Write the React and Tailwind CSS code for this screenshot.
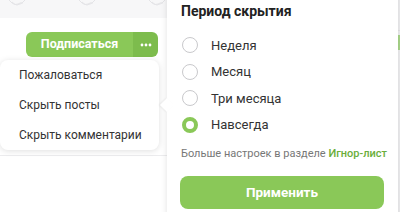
import React, { useState } from "react";

const periods = ["Неделя", "Месяц", "Три месяца", "Навсегда"];
const menuItems = ["Пожаловаться", "Скрыть посты", "Скрыть комментарии"];

const Radio = ({ checked }) => (
  <span
    className={
      checked
        ? "w-[16px] h-[16px] rounded-full border-[4px] border-[#8ac858] bg-white shrink-0"
        : "w-[16px] h-[16px] rounded-full border border-[#c9c9cc] bg-white shrink-0"
    }
  />
);

const Cupcake = () => (
  <svg width="20" height="12" viewBox="0 0 20 12" fill="none" stroke="#e4e4e7" strokeWidth="1">
    <path d="M1 1 Q10 13 19 1" />
    <path d="M5 4 Q8 8 11 6 Q14 4 16 5" />
  </svg>
);

export default function App() {
  const [period, setPeriod] = useState(3);

  return (
    <div
      className="relative w-[400px] h-[212px] overflow-hidden bg-white"
      style={{ fontFamily: "Roboto, 'Noto Sans', sans-serif" }}
    >
      {/* page behind */}
      <div className="flex h-full">
        <div className="flex flex-col w-[398px]">
          <div className="h-[18px] bg-[#f7f7f8] overflow-hidden">
            <div className="flex pl-[7px] gap-[50px] -mt-[2px]">
              <Cupcake />
              <Cupcake />
              <Cupcake />
            </div>
          </div>
          <div className="flex justify-end pr-[240px] pt-[14px]">
            <div className="flex h-[25px] rounded-[6px] overflow-hidden">
              <button className="w-[107px] bg-[#8ac858] text-white text-[12.5px] font-bold">
                Подписаться
              </button>
              <button className="w-[25px] bg-[#7dbc4d] flex items-center justify-center">
                <svg width="12" height="4" viewBox="0 0 12 4" fill="#fff">
                  <circle cx="2" cy="2" r="1.4" />
                  <circle cx="6" cy="2" r="1.4" />
                  <circle cx="10" cy="2" r="1.4" />
                </svg>
              </button>
            </div>
          </div>
          <div className="mt-[98px] h-px bg-[#ececee]" />
        </div>
        <div className="w-[2px] bg-[#efeff1] flex flex-col">
          <div className="h-[30px]" />
          <div className="h-px bg-[#e4e4e6]" />
          <div className="mt-[4px] h-[15px] bg-[#a9d68a]" />
        </div>
      </div>

      {/* dropdown */}
      <div className="absolute left-0 top-[60px] w-[159px] h-[90px] bg-white rounded-[8px] shadow-[0_1px_6px_rgba(0,0,0,0.13)] flex flex-col justify-center gap-[13px] pl-[19px]">
        {menuItems.map((item) => (
          <div key={item} className="text-[12px] leading-[17px] text-[#333]">
            {item}
          </div>
        ))}
      </div>

      {/* hide period panel */}
      <div className="absolute left-[167px] -top-[10px] w-[231px] h-[240px] bg-white shadow-[0_0_6px_rgba(0,0,0,0.12)] px-[14px] pt-[11px]">
        <div className="absolute -left-[5px] top-[110px] w-[10px] h-[10px] bg-white rotate-45 shadow-[-1px_1px_2px_rgba(0,0,0,0.06)]" />
        <div className="relative">
          <div className="text-[14px] leading-[20px] font-bold text-[#222]">
            Период скрытия
          </div>
          <div className="mt-[11px] flex flex-col">
            {periods.map((p, i) => (
              <label
                key={p}
                onClick={() => setPeriod(i)}
                className="h-[26.5px] flex items-center gap-[13px] pl-[1px] cursor-pointer"
              >
                <Radio checked={period === i} />
                <span className="text-[13px] text-[#333]">{p}</span>
              </label>
            ))}
          </div>
          <div className="mt-[8px] text-[11px] leading-[15px] text-[#777] whitespace-nowrap">
            Больше настроек в разделе{" "}
            <span className="text-[#6aae3a] font-medium">Игнор-лист</span>
          </div>
          <button className="mt-[15px] w-[204px] h-[33px] -ml-[1px] rounded-[8px] bg-[#8ac858] text-white text-[13.5px] font-bold">
            Применить
          </button>
        </div>
      </div>
    </div>
  );
}
